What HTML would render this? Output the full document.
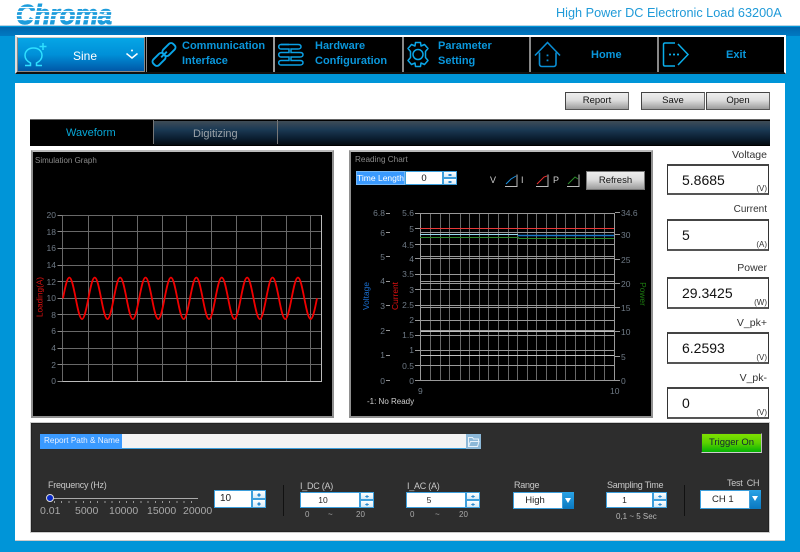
<!DOCTYPE html>
<html><head><meta charset="utf-8">
<style>
html,body{margin:0;padding:0}
body{width:800px;height:552px;position:relative;overflow:hidden;background:#0095d8;font-family:"Liberation Sans",sans-serif}
div,span{position:absolute;box-sizing:border-box;white-space:nowrap}
.nb{top:37px;height:35px;background:#000;border-left:1px solid #888}
.nt{color:#0a97dc;font-weight:bold;font-size:11px;line-height:14px}
.btn{background:linear-gradient(#eee,#ddd 45%,#9c9c9c);border:1px solid #444;border-right-color:#666;border-bottom-color:#555;font-size:9.500px;color:#111;text-align:center;line-height:16px}
.lb{font-size:10.500px;color:#333;right:33px;line-height:12px}
.box{left:667px;width:102px;background:#fff;border:1px solid #333;border-top:2px solid #444;border-bottom:2px solid #555}
.val{left:14px;top:5px;font-size:14px;color:#111;line-height:18px}
.unit{right:1px;bottom:0;font-size:8px;color:#333;line-height:9px}
.dk{font-size:9px;letter-spacing:-.25px;color:#c8c8c8;line-height:12px}
.sm{font-size:8px;color:#aaa;line-height:10px}
.inp{background:#fff;border:1px solid #3d9fdc;font-size:9px;color:#222;text-align:center}
.spin{background:linear-gradient(#fff,#d6e9f6);border:1px solid #3d9fdc}
.spin:before{content:"";position:absolute;left:4px;top:1.500px;border:2.500px solid transparent;border-top:0;border-bottom:2.500px solid #2a8ad0}
.spin:after{content:"";position:absolute;left:4px;bottom:1.500px;border:2.500px solid transparent;border-bottom:0;border-top:2.500px solid #2a8ad0}
.dd{background:linear-gradient(#2aa3e6,#0a78c0);}
.dd:after{content:"";position:absolute;left:2px;top:6px;border:3px solid transparent;border-bottom:0;border-top:5px solid #fff}
</style></head><body>

<div style="left:0;top:0;width:800px;height:26px;background:#fff;border-bottom:1px solid #b9d3e4"></div>
<div style="left:0;top:27px;width:800px;height:9px;background:linear-gradient(#0066ad,#0079c2)"></div>

<svg style="position:absolute;left:0;top:0" width="130" height="27">
<text x="16" y="24" font-family="Liberation Sans" font-weight="bold" font-style="italic" font-size="28" fill="#1c9cdc" textLength="96" lengthAdjust="spacingAndGlyphs" stroke="#1c9cdc" stroke-width="1">Chroma</text>
<g stroke="#fff" stroke-width="1.200"><path d="M10 7.500H120M10 11.500H120M10 15.500H120M10 19.500H120"/></g>
</svg>
<div style="left:556px;top:5px;font-size:12.700px;color:#1f9ad8;line-height:17px">High Power DC Electronic Load 63200A</div>

<!-- NAV -->
<div style="left:15px;top:35px;width:771px;height:39px;background:#000;border:2px solid #fff;border-bottom:2px solid #111;border-left:2px solid #ddd"></div>
<div style="left:17px;top:37px;width:128px;height:35px;background:linear-gradient(#06a6e6,#0090d8 50%,#0058a8);border:1px solid #888;border-top-color:#ccc"></div>
<div class="nb" style="left:146px;width:127px"></div>
<div class="nb" style="left:273px;width:129px;border-left:2px solid #999"></div>
<div class="nb" style="left:402px;width:128px;border-left:2px solid #888"></div>
<div class="nb" style="left:529px;width:129px;border-left:2px solid #888"></div>
<div class="nb" style="left:657px;width:127px;border-left:2px solid #888"></div>

<div style="left:73px;top:49px;color:#fff;font-size:12px;line-height:14px">Sine</div>
<div class="nt" style="left:182px;top:39px">Communication</div>
<div class="nt" style="left:182px;top:53.500px">Interface</div>
<div class="nt" style="left:315px;top:39px">Hardware</div>
<div class="nt" style="left:315px;top:53.500px">Configuration</div>
<div class="nt" style="left:438px;top:39px">Parameter</div>
<div class="nt" style="left:438px;top:53.500px">Setting</div>
<div class="nt" style="left:591px;top:48px">Home</div>
<div class="nt" style="left:726px;top:48px">Exit</div>

<svg style="position:absolute;left:0;top:0" width="800" height="80" fill="none">
<!-- omega -->
<g stroke="#2ee0ff" stroke-width="1.500">
<path d="M25 65.500h5.500v-2.500c-3.500-1.800-5.500-4.300-5.500-7.500 0-4.500 3.500-7.500 8.500-7.500s8.500 3 8.500 7.500c0 3.200-2 5.700-5.500 7.500v2.500h5.500"/>
<path d="M43 43v7M39.500 46.500h7"/>
</g>
<!-- chevron -->
<path d="M126.500 53.500l5.500 4.500 5.500-4.500" stroke="#fff" stroke-width="1.500"/>
<circle cx="132" cy="50.500" r="1" fill="#fff"/>
<!-- chain -->
<g stroke="#0aa6e8" stroke-width="1.900" transform="rotate(-45 164 54.500)">
<rect x="150" y="50.500" width="14" height="8" rx="3"/>
<rect x="164" y="50.500" width="14" height="8" rx="3"/>
<path d="M160 54.500h8"/>
</g>
<!-- hardware -->
<g stroke="#0a9fe4" stroke-width="1.500">
<path d="M281 44.500h17c2 0 3 1 3 2.200s-1 2.300-3 2.300h-7v3.500h9c2 0 3 1 3 2.200s-1 2.300-3 2.300h-9v3.500h9c2 0 3 1 3 2.200s-1 2.300-3 2.300h-19"/>
<path d="M289 44.500h-8c-1.500 0-2.300 1-2.300 2.200s.8 2.300 2.300 2.300h8v3.500h-8c-1.500 0-2.300 1-2.300 2.200s.8 2.300 2.300 2.300h8v3.500h-8c-1.500 0-2.300 1-2.300 2.200s.8 2.300 2.300 2.300"/>
</g>
<!-- gear -->
<g stroke="#0aa6e8" stroke-width="1.500" stroke-linejoin="round" transform="translate(418 54.500)">
<circle cx="0" cy="0" r="5"/>
<path d="M-2.500 -12H2.500L3 -8.500L6.500 -10L10 -6L7.500 -3V3L10 6L6.500 10L3 8.500L2.500 12H-2.500L-3 8.500L-6.500 10L-10 6L-7.500 3V-3L-10 -6L-6.500 -10L-3 -8.500Z"/>
</g>
<!-- home -->
<g stroke="#0a8ed4" stroke-width="1.600">
<path d="M535 55.500l12.500-13 12.500 13"/>
<path d="M539.500 52.500v11.500c0 1.500 1 2.500 2.500 2.500h11.500c1.500 0 2.500-1 2.500-2.500v-11.500"/>
<path d="M547.500 54.500v1.800M547.500 59.500v1.800" stroke-width="1.800"/>
</g>
<!-- exit -->
<g stroke="#0aaeea" stroke-width="1.500">
<path d="M675 43H665c-1 0-1.500.5-1.500 1.500V64.500c0 1 .5 1.500 1.500 1.500H675"/>
<path d="M678 44L688 54.500L678 65"/>
<path d="M669 54.500h10" stroke-width="1.800" stroke-dasharray="2 2"/>
</g>
</svg>

<!-- CONTENT -->
<div style="left:15px;top:83px;width:770px;height:458px;background:#fff;border-bottom:1px solid #ccc"></div>

<div class="btn" style="left:565px;top:92px;width:64px;height:18px">Report</div>
<div class="btn" style="left:641px;top:92px;width:64px;height:18px">Save</div>
<div class="btn" style="left:706px;top:92px;width:64px;height:18px">Open</div>

<!-- TABS -->
<div style="left:30px;top:119px;width:740px;height:27px;background:#000;border-top:1px solid #666"></div>
<div style="left:154px;top:121px;width:616px;height:24px;background:linear-gradient(#3f4c56,#1b3a55 35%,#0a1c2e 75%,#050a10)"></div>
<div style="left:153px;top:120px;width:1px;height:24px;background:#777"></div>
<div style="left:277px;top:120px;width:1px;height:24px;background:#777"></div>
<div style="left:66px;top:126px;color:#08a8d8;font-size:11px;line-height:14px">Waveform</div>
<div style="left:193px;top:127px;color:#9aa2a8;font-size:11px;line-height:14px">Digitizing</div>

<!-- PANELS -->
<div style="left:31px;top:150px;width:303px;height:268px;background:#000;border:2px solid;border-color:#bbb #909090 #909090 #909090"></div>
<div style="left:349px;top:150px;width:304px;height:268px;background:#000;border:2px solid;border-color:#bbb #909090 #909090 #909090"></div>

<svg style="position:absolute;left:0;top:0" width="800" height="425" fill="none" font-family="Liberation Sans">
<text x="35" y="163" font-size="8" fill="#8a8a8a">Simulation Graph</text>
<!-- sim grid -->
<g stroke="#686868" stroke-width="1">
<path d="M62.500 215.500H321M62.500 231.500H321M62.500 248.500H321M62.500 265.500H321M62.500 281.500H321M62.500 298.500H321M62.500 314.500H321M62.500 331.500H321M62.500 348.500H321M62.500 364.500H321"/>
<path d="M88.500 215V381M112.500 215V381M137.500 215V381M162.500 215V381M186.500 215V381M211.500 215V381M236.500 215V381M261.500 215V381M286.500 215V381M310.500 215V381"/>
<path d="M62.500 215V381"/>
</g>
<path d="M62 381.500H322M321.500 215V382" stroke="#bbb"/>
<g stroke="#888"><path d="M57.500 215.500h5M57.500 231.500h5M57.500 248.500h5M57.500 265.500h5M57.500 281.500h5M57.500 298.500h5M57.500 314.500h5M57.500 331.500h5M57.500 348.500h5M57.500 364.500h5M57.500 381.500h5"/></g>
<g font-size="8.500" fill="#6f7a86" text-anchor="end">
<text x="56" y="218">20</text><text x="56" y="235">18</text><text x="56" y="251">16</text><text x="56" y="268">14</text><text x="56" y="285">12</text><text x="56" y="301">10</text><text x="56" y="318">8</text><text x="56" y="334">6</text><text x="56" y="351">4</text><text x="56" y="368">2</text><text x="56" y="384">0</text>
</g>
<text transform="translate(42.500 297) rotate(-90)" text-anchor="middle" font-size="8.200" fill="#e01010">Loading(A)</text>
<path stroke="#f00000" stroke-width="1.800" d="M63 298.300
c2.06-10.66 4.04-20.8 6.35-20.8 2.29 0 4.27 10.14 6.35 20.8 2.06 10.66 4.04 20.8 6.35 20.8 2.29 0 4.27-10.14 6.35-20.8
c2.06-10.66 4.04-20.8 6.35-20.8 2.29 0 4.27 10.14 6.35 20.8 2.06 10.66 4.04 20.8 6.35 20.8 2.29 0 4.27-10.14 6.35-20.8
c2.06-10.66 4.04-20.8 6.35-20.8 2.29 0 4.27 10.14 6.35 20.8 2.06 10.66 4.04 20.8 6.35 20.8 2.29 0 4.27-10.14 6.35-20.8
c2.06-10.66 4.04-20.8 6.35-20.8 2.29 0 4.27 10.14 6.35 20.8 2.06 10.66 4.04 20.8 6.35 20.8 2.29 0 4.27-10.14 6.35-20.8
c2.06-10.66 4.04-20.8 6.35-20.8 2.29 0 4.27 10.14 6.35 20.8 2.06 10.66 4.04 20.8 6.35 20.8 2.29 0 4.27-10.14 6.35-20.8
c2.06-10.66 4.04-20.8 6.35-20.8 2.29 0 4.27 10.14 6.35 20.8 2.06 10.66 4.04 20.8 6.35 20.8 2.29 0 4.27-10.14 6.35-20.8
c2.06-10.66 4.04-20.8 6.35-20.8 2.29 0 4.27 10.14 6.35 20.8 2.06 10.66 4.04 20.8 6.35 20.8 2.29 0 4.27-10.14 6.35-20.8
c2.06-10.66 4.04-20.8 6.35-20.8 2.29 0 4.27 10.14 6.35 20.8 2.06 10.66 4.04 20.8 6.35 20.8 2.29 0 4.27-10.14 6.35-20.8
c2.06-10.66 4.04-20.8 6.35-20.8 2.29 0 4.27 10.14 6.35 20.8 2.06 10.66 4.04 20.8 6.35 20.8 2.29 0 4.27-10.14 6.35-20.8
c2.06-10.66 4.04-20.8 6.35-20.8 2.29 0 4.27 10.14 6.35 20.8 2.06 10.66 4.04 20.8 6.35 20.8 2.29 0 4.27-10.14 6.35-20.8"/>

<!-- reading chart -->
<text x="355" y="162" font-size="8.200" fill="#8a8a8a">Reading Chart</text>
<g stroke="#686868">
<path d="M430.500 213V381M440.500 213V381M449.500 213V381M460.500 213V381M469.500 213V381M479.500 213V381M488.500 213V381M498.500 213V381M508.500 213V381M517.500 213V381M527.500 213V381M536.500 213V381M546.500 213V381M556.500 213V381M565.500 213V381M575.500 213V381M585.500 213V381M594.500 213V381M604.500 213V381"/>
</g>
<g stroke="#9a9a9a">
<path d="M420 232.500H614M420 244.500H614M420 256.500H614M420 258.500H614M420 274.500H614M420 281.500H614M420 283.500H614M420 289.500H614M420 305.500H614M420 307.500H614M420 320.500H614M420 330.500H614M420 335.500H614M420 350.500H614M420 365.500H614"/>
</g>
<g stroke="#c0c0c0"><path d="M420 331.500H614M420 355.500H614"/></g>
<path d="M420 213.500H614M420.500 213V381M614.500 213V381M420 380.500H615" stroke="#999"/>
<path d="M420 228.500H614" stroke="#e83838"/>
<path d="M420 234.500H518" stroke="#9adcf0"/>
<path d="M518 235.500H614" stroke="#1878c8" stroke-width="1.500"/>
<path d="M420 237.500H518L519 238.500H614" stroke="#2c8a2c"/>
<g stroke="#999">
<path d="M386 213.500h4M386 232.500h4M386 256.500h4M386 281.500h4M386 305.500h4M386 330.500h4M386 355.500h4M386 380.500h4"/>
<path d="M415 213.500h5M415 228.500h5M415 244.500h5M415 258.500h5M415 274.500h5M415 289.500h5M415 305.500h5M415 320.500h5M415 335.500h5M415 350.500h5M415 365.500h5M415 380.500h5"/>
<path d="M615 212.500h5M615 234.500h5M615 259.500h5M615 283.500h5M615 307.500h5M615 331.500h5M615 356.500h5M615 380.500h5"/>
</g>
<g font-size="8.500" fill="#6f7a86" text-anchor="end">
<text x="385" y="216">6.8</text><text x="385" y="236">6</text><text x="385" y="260">5</text><text x="385" y="284">4</text><text x="385" y="309">3</text><text x="385" y="334">2</text><text x="385" y="358">1</text><text x="385" y="384">0</text>
<text x="414" y="216">5.6</text><text x="414" y="232">5</text><text x="414" y="248">4.5</text><text x="414" y="262">4</text><text x="414" y="277">3.5</text><text x="414" y="293">3</text><text x="414" y="308">2.5</text><text x="414" y="323">2</text><text x="414" y="338">1.5</text><text x="414" y="353">1</text><text x="414" y="369">0.5</text><text x="414" y="384">0</text>
</g>
<g font-size="8.500" fill="#6f7a86">
<text x="621" y="216">34.6</text><text x="621" y="238">30</text><text x="621" y="263">25</text><text x="621" y="287">20</text><text x="621" y="311">15</text><text x="621" y="335">10</text><text x="621" y="360">5</text><text x="621" y="384">0</text>
<text x="418" y="394">9</text><text x="610" y="394">10</text>
</g>
<text x="367" y="404" font-size="8" fill="#d0d0d0">-1: No Ready</text>
<text transform="translate(369 296) rotate(-90)" text-anchor="middle" font-size="8.400" fill="#1a6fd0">Voltage</text>
<text transform="translate(398 296) rotate(-90)" text-anchor="middle" font-size="8.400" fill="#e01010">Current</text>
<text transform="translate(640 294) rotate(90)" text-anchor="middle" font-size="8.400" fill="#1c7a10">Power</text>
<g font-size="9" fill="#cfcfcf"><text x="490" y="183">V</text><text x="521" y="183">I</text><text x="553" y="183">P</text></g>
<g stroke="#bbb"><path d="M505 186.500h12v-12M536 186.500h12v-12M567 186.500h12v-12"/></g>
<path d="M506 184l5-5 5-3" stroke="#1a90e0"/>
<path d="M537 184l7-7 3-1" stroke="#e83030"/>
<path d="M568 184l7-7 3 2" stroke="#2c8a2c"/>
</svg>

<div style="left:356px;top:171px;width:49px;height:14px;background:#3a9aff;color:#fff;font-size:8.500px;line-height:13px;text-align:center;border:1px solid #77b8f5">Time Length</div>
<div class="inp" style="left:405px;top:171px;width:38px;height:14px;line-height:13px;color:#111;font-size:9.500px">0</div>
<div class="spin" style="left:443px;top:171px;width:14px;height:7px"></div>
<div class="spin" style="left:443px;top:178px;width:14px;height:7px"></div>
<div class="btn" style="left:586px;top:171px;width:59px;height:18.500px;line-height:17px;border-color:#777">Refresh</div>

<!-- READOUTS -->
<div class="lb" style="top:149px">Voltage</div>
<div class="box" style="top:164px;height:31px"><span class="val">5.8685</span><span class="unit">(V)</span></div>
<div class="lb" style="top:204px;font-size:10px">Current</div>
<div class="box" style="top:219px;height:32px"><span class="val">5</span><span class="unit">(A)</span></div>
<div class="lb" style="top:262px">Power</div>
<div class="box" style="top:277px;height:32px"><span class="val">29.3425</span><span class="unit">(W)</span></div>
<div class="lb" style="top:317px">V_pk+</div>
<div class="box" style="top:332px;height:32px"><span class="val">6.2593</span><span class="unit">(V)</span></div>
<div class="lb" style="top:372px">V_pk-</div>
<div class="box" style="top:387px;height:32px"><span class="val">0</span><span class="unit">(V)</span></div>

<!-- BOTTOM -->
<div style="left:31px;top:423px;width:738px;height:109px;background:#2d2d2d;border:1px solid #222;outline:1px solid #ccc"></div>
<div style="left:40px;top:434px;width:82px;height:15px;background:#3a9aff;color:#e8f0ff;font-size:8.200px;line-height:14px;padding-left:4px">Report Path &amp; Name</div>
<div style="left:122px;top:434px;width:344px;height:15px;background:#f3f3f3;border-bottom:1px solid #3d9fdc"></div>
<div style="left:466px;top:434px;width:15px;height:15px;background:#8cb8d8"></div>
<svg style="position:absolute;left:466px;top:434px" width="15" height="15" fill="none" stroke="#e8f2fa"><path d="M2.500 12.500V3.500h4l1 1.500h5v2M2.500 12.500h9l1.500-5H4.500z"/></svg>
<div style="left:701px;top:433px;width:61px;height:20px;background:linear-gradient(#7fe000,#5ad000 50%,#04b204);border:1px solid #333;border-right-color:#bbb;border-bottom-color:#ccc;font-size:9.500px;color:#123;text-align:center;line-height:18px">Trigger On</div>

<div class="dk" style="left:48px;top:479px">Frequency (Hz)</div>
<div style="left:52px;top:498px;width:146px;height:1px;background:#aaa"></div>
<div style="left:54px;top:501px;width:144px;height:2px;background:repeating-linear-gradient(90deg,#999 0 1px,transparent 1px 7.200px)"></div>
<div style="left:46px;top:494px;width:8px;height:8px;border-radius:50%;background:#0a2ac8;border:1px solid #ddd"></div>
<div style="left:40px;top:505px;font-size:10.500px;color:#a8a8a8;line-height:12px">0.01</div>
<div style="left:75px;top:505px;font-size:10.500px;color:#a8a8a8;line-height:12px">5000</div>
<div style="left:109px;top:505px;font-size:10.500px;color:#a8a8a8;line-height:12px">10000</div>
<div style="left:147px;top:505px;font-size:10.500px;color:#a8a8a8;line-height:12px">15000</div>
<div style="left:183px;top:505px;font-size:10.500px;color:#a8a8a8;line-height:12px">20000</div>

<div class="inp" style="left:214px;top:490px;width:38px;height:18px;text-align:left;padding-left:5px;line-height:16px;font-size:10px">10</div>
<div class="spin" style="left:251.500px;top:490px;width:14px;height:9px"></div>
<div class="spin" style="left:251.500px;top:499px;width:14px;height:9px"></div>

<div style="left:283px;top:485px;width:1px;height:31px;background:#111"></div>

<div class="dk" style="left:300px;top:480px">I_DC (A)</div>
<div class="inp" style="left:300px;top:492px;width:60px;height:16px;line-height:14px;padding-right:14px;font-size:8.500px">10</div>
<div class="spin" style="left:360px;top:492px;width:14px;height:8px"></div>
<div class="spin" style="left:360px;top:500px;width:14px;height:8px"></div>
<div class="sm" style="left:305px;top:510px">0</div>
<div class="sm" style="left:328px;top:510px">~</div>
<div class="sm" style="left:356px;top:510px">20</div>

<div class="dk" style="left:407px;top:480px">I_AC (A)</div>
<div class="inp" style="left:406px;top:492px;width:60px;height:16px;line-height:14px;padding-right:14px;font-size:8.500px">5</div>
<div class="spin" style="left:466px;top:492px;width:14px;height:8px"></div>
<div class="spin" style="left:466px;top:500px;width:14px;height:8px"></div>
<div class="sm" style="left:410px;top:510px">0</div>
<div class="sm" style="left:435px;top:510px">~</div>
<div class="sm" style="left:459px;top:510px">20</div>

<div class="dk" style="left:514px;top:479px">Range</div>
<div class="inp" style="left:513px;top:492px;width:50px;height:17px;line-height:15px;padding-right:6px;font-size:9.500px">High</div>
<div class="dd" style="left:563px;top:492px;width:10.500px;height:17px"></div>

<div class="dk" style="left:607px;top:479px">Sampling Time</div>
<div class="inp" style="left:606px;top:492px;width:47px;height:16px;line-height:14px;padding-right:10px;font-size:8.500px">1</div>
<div class="spin" style="left:653px;top:492px;width:14px;height:8px"></div>
<div class="spin" style="left:653px;top:500px;width:14px;height:8px"></div>
<div class="sm" style="left:616px;top:512px;color:#b8b8b8">0,1 ~ 5 Sec</div>

<div style="left:684px;top:485px;width:1px;height:31px;background:#111"></div>

<div class="dk" style="left:727px;top:477px;word-spacing:2px">Test CH</div>
<div class="inp" style="left:700px;top:490px;width:50px;height:19px;line-height:17px;text-align:left;padding-left:11px;font-size:9.500px">CH 1</div>
<div class="dd" style="left:750px;top:490px;width:10.500px;height:19px"></div>

</body></html>
